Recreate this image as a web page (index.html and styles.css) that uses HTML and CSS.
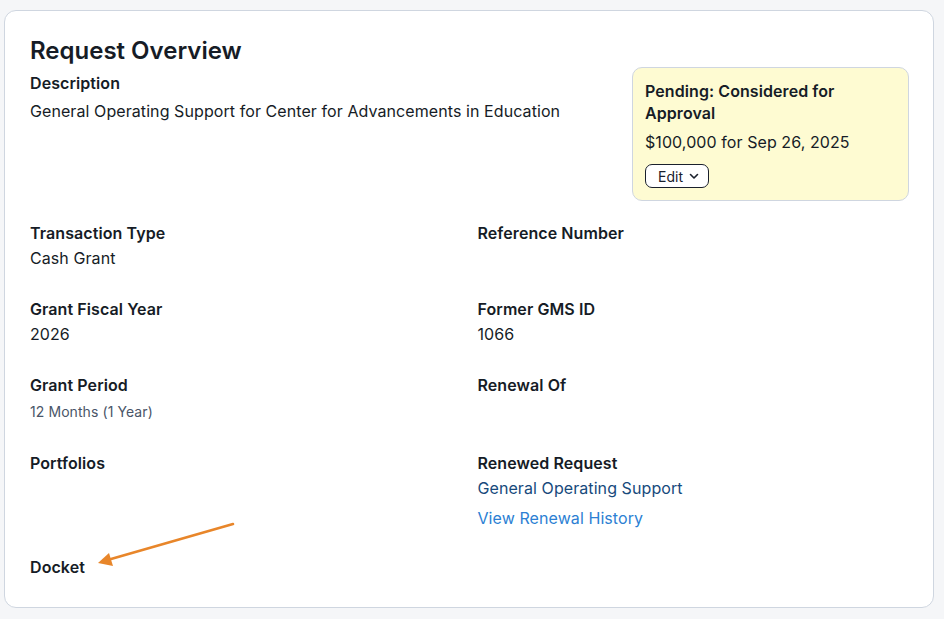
FILE: index.html
```html
<!DOCTYPE html>
<html lang="en">
<head>
    <meta charset="UTF-8">
    <meta name="viewport" content="width=device-width, initial-scale=1.0">
    <title>Request Overview</title>
    <link rel="stylesheet" href="styles.css">
</head>
<body>
    <section class="card">
        <h1 class="card-title">Request Overview</h1>

        <div class="overview-top">
            <div class="field description">
                <div class="field-label">Description</div>
                <div class="field-value">General Operating Support for Center for Advancements in Education</div>
            </div>

            <div class="status-box">
                <div class="status-title">Pending: Considered for Approval</div>
                <div class="status-amount">$100,000 for Sep 26, 2025</div>
                <button class="edit-button">Edit
                    <svg width="12" height="12" viewBox="0 0 12 12"><path d="M2.5 4.5 L6 8 L9.5 4.5" fill="none" stroke="#1a202c" stroke-width="1.6" stroke-linecap="round" stroke-linejoin="round"/></svg>
                </button>
            </div>
        </div>

        <div class="field-grid">
            <div class="field">
                <div class="field-label">Transaction Type</div>
                <div class="field-value">Cash Grant</div>
            </div>
            <div class="field">
                <div class="field-label">Reference Number</div>
            </div>

            <div class="field">
                <div class="field-label">Grant Fiscal Year</div>
                <div class="field-value">2026</div>
            </div>
            <div class="field">
                <div class="field-label">Former GMS ID</div>
                <div class="field-value">1066</div>
            </div>

            <div class="field">
                <div class="field-label">Grant Period</div>
                <div class="field-value small">12 Months (1 Year)</div>
            </div>
            <div class="field">
                <div class="field-label">Renewal Of</div>
            </div>

            <div class="field">
                <div class="field-label">Portfolios</div>
            </div>
            <div class="field">
                <div class="field-label">Renewed Request</div>
                <a class="field-value link-dark" href="#">General Operating Support</a>
                <a class="history-link" href="#">View Renewal History</a>
            </div>

            <div class="field docket">
                <div class="field-label">Docket</div>
            </div>
        </div>

        <!-- pointer to the docket field -->
        <svg class="pointer" width="260" height="70" viewBox="0 0 260 70">
            <line x1="228" y1="13" x2="106" y2="48" stroke="#e8862a" stroke-width="2.6" stroke-linecap="round"/>
            <polygon points="93,52 104,42 108,55" fill="#e8862a"/>
        </svg>
    </section>
</body>
</html>
```

FILE: styles.css
```css
body {
    margin: 0;
    padding: 10px 10px 11px 4px;
    background-color: #f5f6f8;
    font-family: Inter, "Noto Sans", sans-serif;
    letter-spacing: 0.08px;
    color: #161c26;
}

.card {
    position: relative;
    width: 930px;
    box-sizing: border-box;
    background: #fff;
    border: 1px solid #cfd6e0;
    border-radius: 12px;
    padding: 24px 24px 28px 25px;
}

.card-title {
    margin: 0;
    font-size: 24px;
    line-height: 32px;
    font-weight: 600;
    letter-spacing: 0;
}

.overview-top {
    display: flex;
    justify-content: space-between;
    align-items: flex-start;
}

.description {
    padding-top: 4px;
}

.description .field-value {
    margin-top: 4px;
}

.field-label {
    font-size: 16px;
    line-height: 24px;
    font-weight: 600;
}

.field-value {
    display: block;
    font-size: 16px;
    line-height: 24px;
    margin-top: 1px;
}

.field-value.small {
    font-size: 14px;
    color: #4a5568;
    margin-top: 3px;
}

.link-dark {
    color: #174a7c;
    text-decoration: none;
}

.history-link {
    display: block;
    margin-top: 6px;
    font-size: 16px;
    line-height: 24px;
    color: #2c7fd3;
    text-decoration: none;
}

.docket {
    margin-top: -2px;
}

.status-box {
    width: 277px;
    box-sizing: border-box;
    padding: 12px;
    background: #fefbd2;
    border: 1px solid #cfd6e0;
    border-radius: 10px;
}

.status-title {
    font-size: 16px;
    line-height: 22px;
    font-weight: 600;
}

.status-amount {
    margin-top: 6px;
    font-size: 16px;
    line-height: 24px;
}

.edit-button {
    display: flex;
    align-items: center;
    gap: 5px;
    margin-top: 10px;
    height: 24px;
    padding: 0 8px 0 12px;
    background: #fff;
    border: 1px solid #1a202c;
    border-radius: 7px;
    font-family: inherit;
    font-size: 14px;
    color: #1a202c;
}

.field-grid {
    display: grid;
    grid-template-columns: 1fr 1fr;
    column-gap: 16px;
    row-gap: 27px;
    margin-top: 20px;
}

.pointer {
    position: absolute;
    left: 0;
    top: 500px;
}
```
